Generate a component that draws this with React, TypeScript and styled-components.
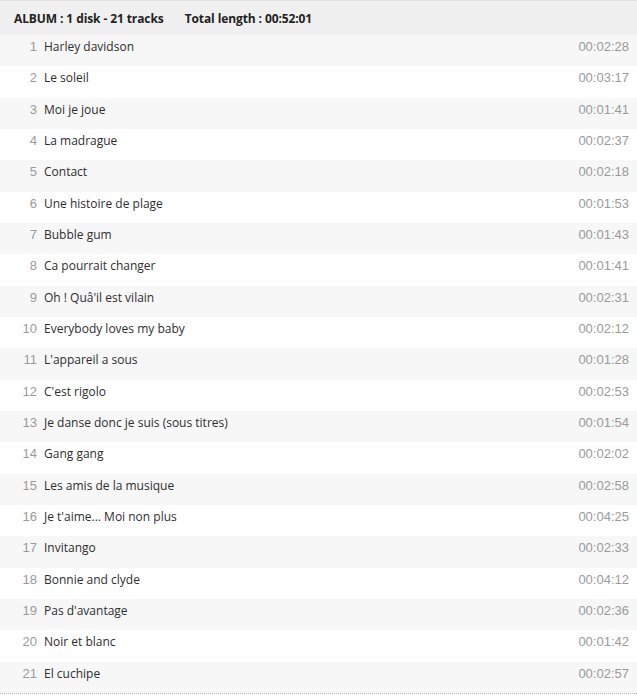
import React, { FunctionComponent } from 'react';
import styled, { createGlobalStyle } from 'styled-components';

interface Track {
  title: string;
  length: string;
}

const tracks: Track[] = [
  { title: 'Harley davidson', length: '00:02:28' },
  { title: 'Le soleil', length: '00:03:17' },
  { title: 'Moi je joue', length: '00:01:41' },
  { title: 'La madrague', length: '00:02:37' },
  { title: 'Contact', length: '00:02:18' },
  { title: 'Une histoire de plage', length: '00:01:53' },
  { title: 'Bubble gum', length: '00:01:43' },
  { title: 'Ca pourrait changer', length: '00:01:41' },
  { title: "Oh ! Quâ'il est vilain", length: '00:02:31' },
  { title: 'Everybody loves my baby', length: '00:02:12' },
  { title: "L'appareil a sous", length: '00:01:28' },
  { title: "C'est rigolo", length: '00:02:53' },
  { title: 'Je danse donc je suis (sous titres)', length: '00:01:54' },
  { title: 'Gang gang', length: '00:02:02' },
  { title: 'Les amis de la musique', length: '00:02:58' },
  { title: "Je t'aime... Moi non plus", length: '00:04:25' },
  { title: 'Invitango', length: '00:02:33' },
  { title: 'Bonnie and clyde', length: '00:04:12' },
  { title: "Pas d'avantage", length: '00:02:36' },
  { title: 'Noir et blanc', length: '00:01:42' },
  { title: 'El cuchipe', length: '00:02:57' }
];

const GlobalStyle = createGlobalStyle`
  body {
    margin: 0;
    background: #ffffff;
    font-family: "Open Sans", "Liberation Sans", sans-serif;
  }
`;

const Container = styled.div`
  width: 637px;
  display: flex;
  flex-direction: column;
`;

const Header = styled.div`
  height: 35px;
  box-sizing: border-box;
  border-top: 1px solid #e2e2e2;
  background-color: #f0f0f0;
  display: flex;
  align-items: center;
  gap: 21px;
  padding-left: 14px;
  font-size: 12px;
  font-weight: 700;
  letter-spacing: -0.1px;
  color: #222222;
`;

const List = styled.div`
  display: flex;
  flex-direction: column;
  border-bottom: 1px dotted #b5b5b5;
`;

const Row = styled.div<{ $odd: boolean }>`
  height: 31.33px;
  box-sizing: border-box;
  display: grid;
  grid-template-columns: 37px 1fr auto;
  align-items: center;
  background-color: ${({ $odd }): string => $odd ? '#f7f7f7' : '#ffffff'};
  padding-right: 8px;
  padding-bottom: 8px;
`;

const Number = styled.span`
  text-align: right;
  font-family: "Liberation Sans", Arial, sans-serif;
  font-size: 13px;
  color: #9a9a9a;
`;

const Title = styled.span`
  padding-left: 7px;
  font-size: 12px;
  color: #2e2e2e;
`;

const Length = styled.span`
  font-family: "Liberation Sans", Arial, sans-serif;
  font-size: 13px;
  color: #9a9a9a;
`;

const App: FunctionComponent = () => (
  <Container>
    <GlobalStyle />
    <Header>
      <span>ALBUM : 1 disk - 21 tracks</span>
      <span>Total length : 00:52:01</span>
    </Header>
    <List>
      { tracks.map((track, index) => (
        <Row key={ index } $odd={ index % 2 === 0 }>
          <Number>{ index + 1 }</Number>
          <Title>{ track.title }</Title>
          <Length>{ track.length }</Length>
        </Row>
      )) }
    </List>
  </Container>
);

export default App;
